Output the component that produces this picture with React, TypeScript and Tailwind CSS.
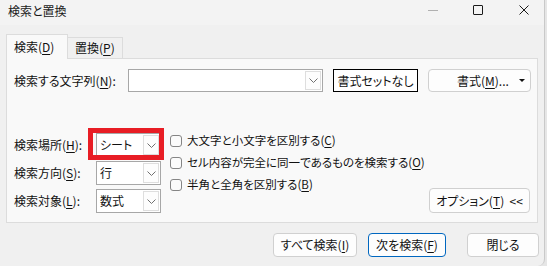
import React from 'react';

const U = ({ children }: { children: React.ReactNode }) => (
  <span className="underline underline-offset-[2px] decoration-[1px]">{children}</span>
);

function Chevron() {
  return (
    <svg width="9" height="5" viewBox="0 0 9 5" fill="none">
      <path d="M0.5 0.5 L4.5 4.5 L8.5 0.5" stroke="#707070" strokeWidth="1" />
    </svg>
  );
}

function Combo({ value, width, height = 24 }: { value?: string; width: number; height?: number }) {
  return (
    <div
      className="flex border border-[#a7a7a7] bg-white box-border"
      style={{ width, height }}
    >
      <div className="flex-1 flex items-center pl-[3px] text-[12px] text-[#111]">{value}</div>
      <div className="w-[18px] flex p-px">
        <div className="flex-1 flex items-center justify-center border border-[#dedede] bg-[#fdfdfd]">
          <Chevron />
        </div>
      </div>
    </div>
  );
}

function Btn({
  children,
  width,
  height = 24,
  variant = 'normal',
}: {
  children: React.ReactNode;
  width: number;
  height?: number;
  variant?: 'normal' | 'blue' | 'black';
}) {
  const cls =
    variant === 'black'
      ? 'border border-black bg-white'
      : variant === 'blue'
        ? 'border border-[#0067c0] bg-[#fdfdfd] rounded-[4px]'
        : 'border border-[#d0d0d0] bg-[#fdfdfd] rounded-[4px]';
  return (
    <div
      className={`flex items-center justify-center box-border text-[12px] text-[#111] ${cls}`}
      style={{ width, height }}
    >
      {children}
    </div>
  );
}

function Check({ children }: { children: React.ReactNode }) {
  return (
    <div className="flex items-center h-[12px]">
      <div className="w-[12px] h-[12px] border border-[#858585] rounded-[3px] bg-[#fbfbfb] box-border" />
      <span className="ml-[5px] text-[11.5px] text-[#111] whitespace-nowrap">{children}</span>
    </div>
  );
}

export default function App() {
  return (
    <div className="w-[547px] h-[266px] bg-[#e6e6e6] flex font-['Noto_Sans_CJK_JP',sans-serif] [font-feature-settings:'palt'] overflow-hidden">
      <div className="w-[545px] h-full bg-[#f0f0f0] border-r border-[#c9c9c9] rounded-br-[7px] flex flex-col box-border">
        {/* title bar */}
        <div className="h-[25px] bg-[#f3f3f3] flex items-start">
          <span className="ml-[8px] mt-[3px] text-[12px] text-[#1a1a1a] leading-[16px]">検索と置換</span>
          <div className="ml-auto mt-[5px] mr-[15px] flex items-center h-[10px]">
            <div className="w-[10px] h-px bg-[#b0b0b0]" />
            <div className="ml-[35px] w-[10px] h-[10px] border border-[#1a1a1a] rounded-[1px] box-border" />
            <svg className="ml-[36px]" width="10" height="10" viewBox="0 0 10 10">
              <path d="M0.5 0.5 L9.5 9.5 M9.5 0.5 L0.5 9.5" stroke="#1a1a1a" strokeWidth="1" />
            </svg>
          </div>
        </div>

        {/* tabs + panel */}
        <div className="ml-[6px] mt-[9px] w-[532px]">
          <div className="flex items-end h-[24px]">
            <div className="relative z-10 -mb-px w-[62px] h-[25px] bg-[#f9f9f9] border border-b-0 border-[#dcdcdc] box-border flex items-start pl-[7px] pt-[4px] text-[12px] text-[#111] leading-[16px]">
              検索(<U>D</U>)
            </div>
            <div className="w-[55px] h-[21px] bg-[#f0f0f0] border-t border-r border-[#dcdcdc] box-border flex items-start pl-[7px] pt-[2px] text-[12px] text-[#111] leading-[16px]">
              置換(<U>P</U>)
            </div>
          </div>
          <div className="h-[165px] bg-[#f9f9f9] border border-[#dcdcdc] box-border flex flex-col">
            {/* find what */}
            <div className="mt-[10px] ml-[7px] flex items-center h-[23px]">
              <span className="w-[114px] text-[12px] text-[#111] whitespace-nowrap">
                検索する文字列(<U>N</U>):
              </span>
              <Combo width={195} height={23} />
              <div className="ml-[10px]">
                <Btn width={85} height={23} variant="black">
                  書式セットなし
                </Btn>
              </div>
              <div className="ml-[10px]">
                <div className="relative w-[103px] h-[23px] flex items-center border border-[#d0d0d0] bg-[#fdfdfd] rounded-[4px] box-border text-[12px] text-[#111]">
                  <span className="ml-[28px]">
                    書式(<U>M</U>)...
                  </span>
                  <svg className="ml-auto mr-[5px]" width="6" height="3" viewBox="0 0 6 3">
                    <path d="M0 0 L6 0 L3 3 Z" fill="#111" />
                  </svg>
                </div>
              </div>
            </div>

            {/* options */}
            <div className="mt-[41px] ml-[7px] mr-[7px] flex">
              <div className="grid grid-cols-[82px_65px] gap-y-[4px] items-center">
                <span className="text-[12px] text-[#111] whitespace-nowrap">
                  検索場所(<U>H</U>):
                </span>
                <div className="relative">
                  <Combo value="シート" width={65} />
                  <div className="absolute left-[-8px] top-[-5px] w-[76px] h-[32px] border-[5px] border-[#e81d25] box-border" />
                </div>
                <span className="text-[12px] text-[#111] whitespace-nowrap">
                  検索方向(<U>S</U>):
                </span>
                <Combo value="行" width={65} />
                <span className="text-[12px] text-[#111] whitespace-nowrap">
                  検索対象(<U>L</U>):
                </span>
                <Combo value="数式" width={65} />
              </div>
              <div className="ml-[9px] mt-[2px] flex flex-col gap-[10px]">
                <Check>
                  大文字と小文字を区別する(<U>C</U>)
                </Check>
                <Check>
                  セル内容が完全に同一であるものを検索する(<U>O</U>)
                </Check>
                <Check>
                  半角と全角を区別する(<U>B</U>)
                </Check>
              </div>
              <div className="ml-auto self-end">
                <Btn width={101} height={25}>
                  オプション(<U>T</U>)&nbsp;&nbsp;&lt;&lt;
                </Btn>
              </div>
            </div>
          </div>
        </div>

        {/* bottom buttons */}
        <div className="mt-[10px] flex justify-end pr-[5px]">
          <Btn width={84}>
            すべて検索(<U>I</U>)
          </Btn>
          <div className="ml-[11px]">
            <Btn width={78} variant="blue">
              次を検索(<U>F</U>)
            </Btn>
          </div>
          <div className="ml-[21px]">
            <Btn width={72}>閉じる</Btn>
          </div>
        </div>
      </div>
    </div>
  );
}
